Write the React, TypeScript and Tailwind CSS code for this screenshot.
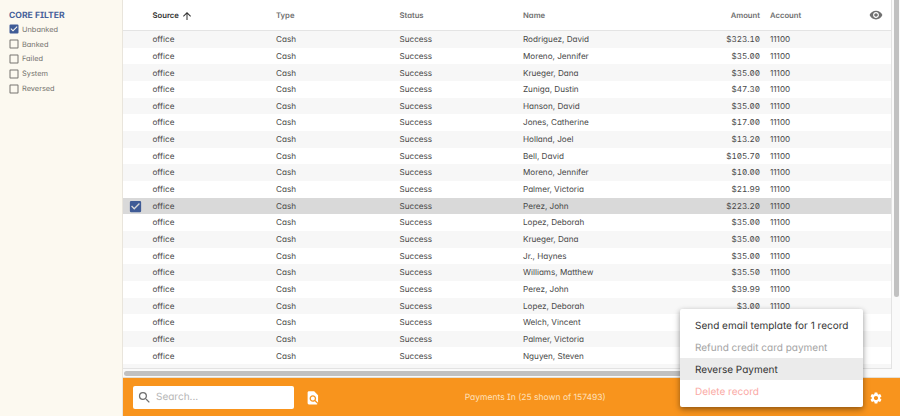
import React from "react";
import {
  MdArrowUpward,
  MdCheckBox,
  MdCheckBoxOutlineBlank,
  MdFindInPage,
  MdSearch,
  MdSettings,
  MdVisibility,
} from "react-icons/md";

const payments: [string, string][] = [
  ["Rodriguez, David", "$323.10"],
  ["Moreno, Jennifer", "$35.00"],
  ["Krueger, Dana", "$35.00"],
  ["Zuniga, Dustin", "$47.30"],
  ["Hanson, David", "$35.00"],
  ["Jones, Catherine", "$17.00"],
  ["Holland, Joel", "$13.20"],
  ["Bell, David", "$105.70"],
  ["Moreno, Jennifer", "$10.00"],
  ["Palmer, Victoria", "$21.99"],
  ["Perez, John", "$223.20"],
  ["Lopez, Deborah", "$35.00"],
  ["Krueger, Dana", "$35.00"],
  ["Jr., Haynes", "$35.00"],
  ["Williams, Matthew", "$35.50"],
  ["Perez, John", "$39.99"],
  ["Lopez, Deborah", "$3.00"],
  ["Welch, Vincent", "$35.00"],
  ["Palmer, Victoria", "$35.00"],
  ["Nguyen, Steven", "$35.00"],
];

const SELECTED = 10;
const columns = "grid grid-cols-[29.5px_123.5px_123.5px_123.5px_123px_114px_1fr] items-center";

function Filter({ label, checked }: { label: string; checked?: boolean }) {
  return (
    <label className="flex h-[14.8px] items-center gap-[2px] text-[7.4px] text-[#74736f]">
      {checked ? (
        <MdCheckBox className="size-[12px] text-[#3f5b96]" />
      ) : (
        <MdCheckBoxOutlineBlank className="size-[12px] text-[#777570]" />
      )}
      {label}
    </label>
  );
}

function Sidebar() {
  return (
    <aside className="w-[123px] shrink-0 border-r border-[#e9e5dc] bg-[#fcf9f0] pl-[8px] pt-[11px]">
      <h2 className="h-[11px] pl-[1px] text-[8.6px] leading-[11px] font-bold text-[#46619b]">CORE FILTER</h2>
      <Filter label="Unbanked" checked />
      <Filter label="Banked" />
      <Filter label="Failed" />
      <Filter label="System" />
      <Filter label="Reversed" />
    </aside>
  );
}

function PaymentsTable() {
  return (
    <div className="h-[369px] w-[769px] overflow-hidden border-r border-b border-[#e3e3e3]">
      <div className={`${columns} h-[31px] border-b border-[#e4e4e4] pt-[1px] text-[7.7px] font-semibold text-[#707070]`}>
        <span />
        <span className="flex items-center gap-[2px] text-[#333]">
          Source <MdArrowUpward className="size-[12px]" />
        </span>
        <span>Type</span>
        <span>Status</span>
        <span>Name</span>
        <span className="text-right">Amount</span>
        <span className="flex items-center justify-between pl-[10px] pr-[8px]">
          Account <MdVisibility className="mb-[2px] size-[14px] text-[#707070]" />
        </span>
      </div>
      {payments.map(([name, amount], i) => (
        <div
          key={i}
          className={`${columns} h-[16.67px] pt-[1.2px] text-[8.15px] leading-[15.47px] text-[#484848] ${
            i === SELECTED ? "bg-[#d9d9d9]" : i % 2 === 0 ? "bg-[#f7f7f7]" : "bg-white"
          }`}
        >
          <span className="pl-[4.5px]">
            {i === SELECTED && <MdCheckBox className="mb-[1px] size-[15px] text-[#3f5b96]" />}
          </span>
          <span>office</span>
          <span>Cash</span>
          <span>Success</span>
          <span>{name}</span>
          <span className="text-right tabular-nums slashed-zero">{amount}</span>
          <span className="pl-[10px]">11100</span>
        </div>
      ))}
      <div className="h-[5px] bg-[#f7f7f7]" />
    </div>
  );
}

function ActionMenu() {
  return (
    <div className="absolute top-[308.7px] left-[680px] flex h-[98.6px] w-[183px] flex-col rounded-[2px] bg-white py-[5px] text-[10px] text-[#333] shadow-[0_2px_5px_rgba(0,0,0,0.3),0_3px_9px_rgba(0,0,0,0.16)]">
      <div className="flex flex-1 items-center pt-[3px] pl-[15px]">Send email template for 1 record</div>
      <div className="flex flex-1 items-center pt-[3px] pl-[15px] text-[#a3a3a3]">Refund credit card payment</div>
      <div className="flex flex-1 items-center bg-[#ebebeb] pt-[3px] pl-[15px]">Reverse Payment</div>
      <div className="flex flex-1 items-center pt-[3px] pl-[15px] text-[#faaaa5]">Delete record</div>
    </div>
  );
}

export default function App() {
  return (
    <div className="relative flex h-[416px] w-[900px] overflow-hidden bg-white font-['Inter',sans-serif] antialiased [font-feature-settings:'cv11','cv08'] [text-rendering:geometricPrecision]">
      <Sidebar />
      <main className="flex min-w-0 flex-1 flex-col">
        <div className="flex h-[369px]">
          <PaymentsTable />
          <div className="flex-1 bg-[#fafafa] pl-[2px]">
            <div className="h-[297px] w-[5px] rounded-b-full bg-[#c1c1c1]" />
          </div>
        </div>
        <div className="h-[9px] border-b border-[#e4dfd5] bg-[#fafafa] pt-[2px]">
          <div className="ml-[1px] h-[5px] w-[620px] rounded-full bg-[#c1c1c1]" />
        </div>
        <footer className="flex flex-1 items-center bg-[#f8941d] pt-[1px] pl-[10px]">
          <div className="flex h-[22.4px] w-[160.5px] items-center rounded-[2px] bg-white pl-[4px] text-[10px] text-[#b5b5b5]">
            <MdSearch className="mr-[4px] size-[15px] text-[#707070]" />
            <span className="pt-[1px]">Search...</span>
          </div>
          <MdFindInPage className="ml-[11.5px] size-[15.7px] text-white" />
          <div className="flex-1 pt-[1px] pl-[144px] text-[8.5px] text-[#fee1bd]">Payments In (25 shown of 157493)</div>
          <MdSettings className="mr-[17px] size-[14px] text-white" />
        </footer>
      </main>
      <ActionMenu />
    </div>
  );
}
